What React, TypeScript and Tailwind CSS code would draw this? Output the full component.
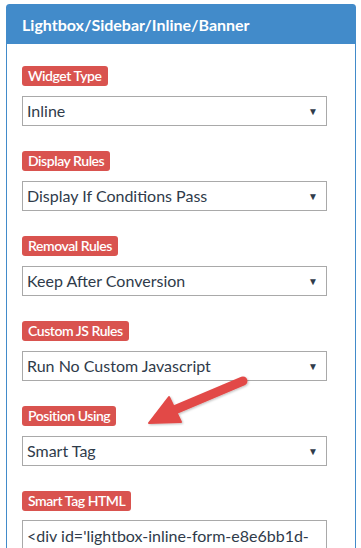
import React from "react";

const fields = [
  { label: "Widget Type", value: "Inline" },
  { label: "Display Rules", value: "Display If Conditions Pass" },
  { label: "Removal Rules", value: "Keep After Conversion" },
  { label: "Custom JS Rules", value: "Run No Custom Javascript" },
  { label: "Position Using", value: "Smart Tag" },
];

function Badge({ children }: { children: React.ReactNode }) {
  return (
    <div className="flex">
      <span className="h-[20px] rounded-[3px] bg-[#d9534f] px-[6px] text-[14px] leading-[20px] font-semibold text-white tracking-[-0.45px]">
        {children}
      </span>
    </div>
  );
}

function Select({ value }: { value: string }) {
  return (
    <div className="mt-[10px] flex h-[30px] w-[305px] items-center justify-between border border-[#a9a9a9] bg-white pl-[4px] pr-[8px]">
      <span className="text-[16px] text-[#2f3b4a]">{value}</span>
      <span className="text-[10px] text-[#2f3b4a]">▼</span>
    </div>
  );
}

export default function App() {
  return (
    <div className="relative h-[548px] w-[361px] overflow-hidden bg-white pt-[4px] pl-[6px] font-['Lato','Open_Sans',sans-serif]">
      <div className="w-[350px] rounded-t-[3px] border border-[#428bca]">
        <div className="flex h-[39px] items-center bg-[#428bca] pl-[15px] text-[16px] font-bold text-white">
          Lightbox/Sidebar/Inline/Banner
        </div>
        <div className="flex flex-col pl-[15px] pt-[22px]">
          {fields.map((f) => (
            <div key={f.label} className="mb-[25px]">
              <Badge>{f.label}</Badge>
              <Select value={f.value} />
            </div>
          ))}
          <Badge>Smart Tag HTML</Badge>
          <div className="mt-[9px] h-[60px] w-[305px] border border-[#a9a9a9] bg-white pl-[4px] pt-[3px] text-[16px] text-[#2f3b4a]">
            &lt;div id='lightbox-inline-form-e8e6bb1d-
          </div>
        </div>
      </div>
      <svg className="absolute left-0 top-0" width="361" height="548">
        <defs>
          <filter id="sh" x="-20%" y="-20%" width="140%" height="140%">
            <feDropShadow dx="1" dy="1" stdDeviation="1.2" floodColor="#000" floodOpacity="0.25" />
          </filter>
        </defs>
        <g filter="url(#sh)" fill="#e24a47" stroke="#e24a47">
          <line x1="243" y1="381" x2="172" y2="411" strokeWidth="9" strokeLinecap="round" />
          <polygon points="149,423 169,397 181,422" strokeWidth="2" strokeLinejoin="round" />
        </g>
      </svg>
    </div>
  );
}
